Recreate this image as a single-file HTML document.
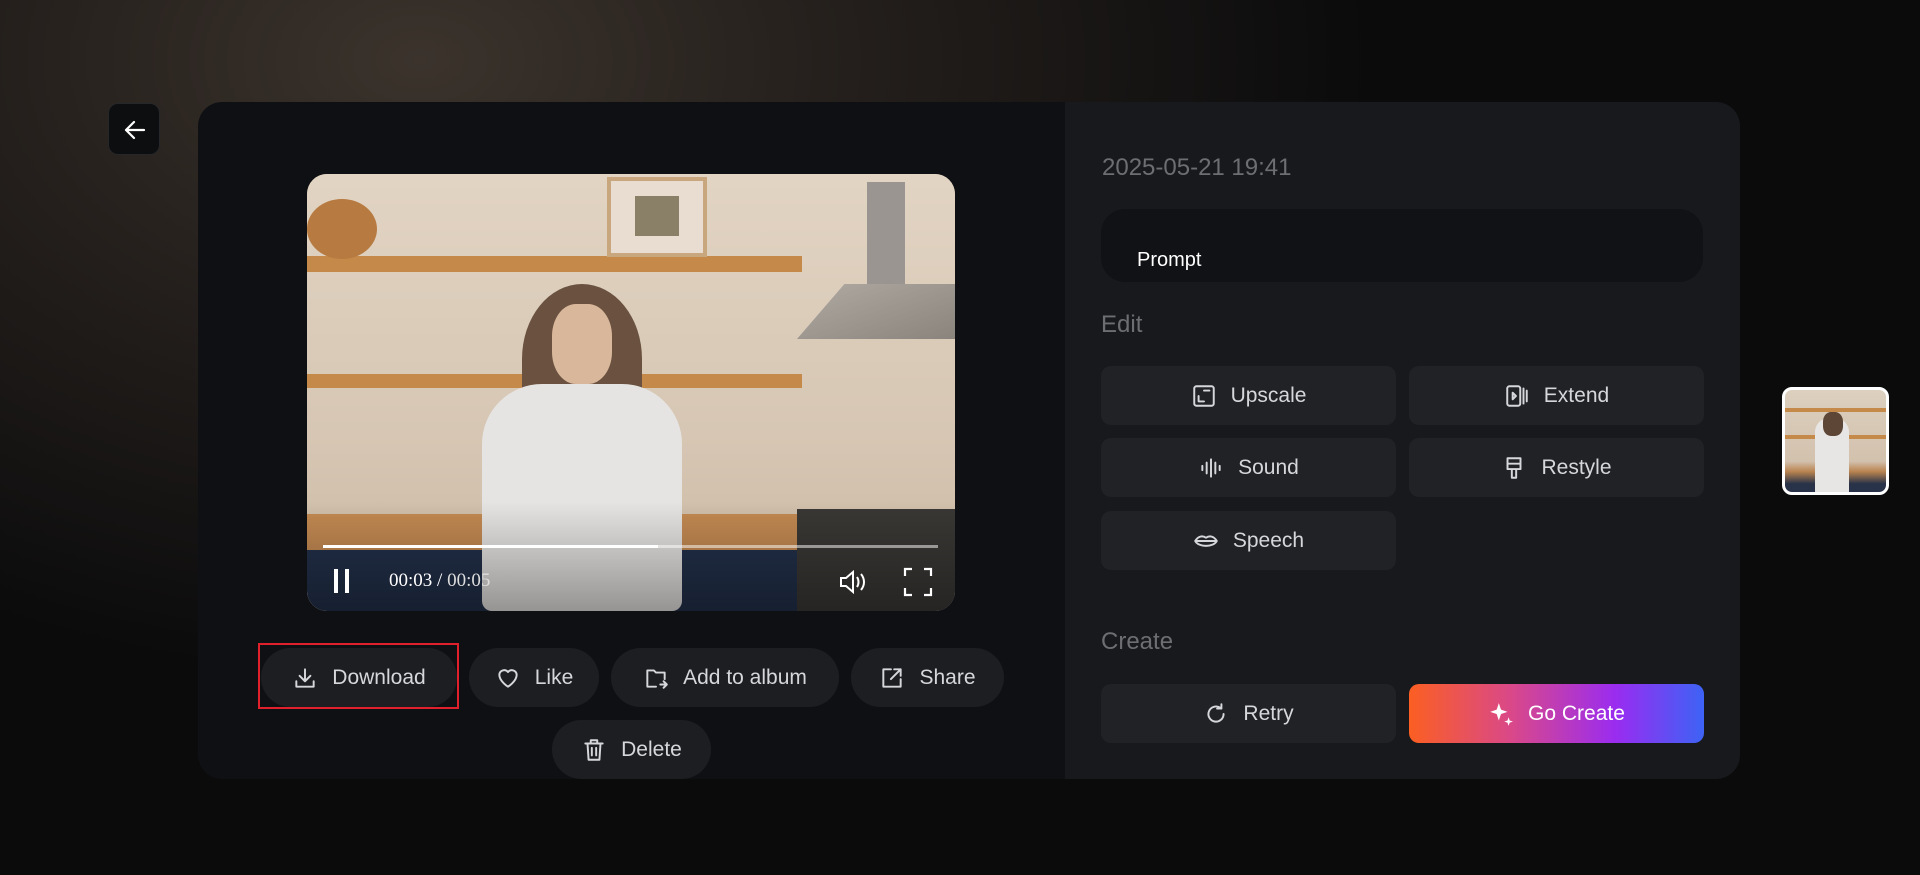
<!DOCTYPE html>
<html><head><meta charset="utf-8">
<style>
*{margin:0;padding:0;box-sizing:border-box}
body{width:1920px;height:875px;overflow:hidden;font-family:"Liberation Sans",sans-serif;
background:radial-gradient(ellipse 950px 620px at 420px 60px,#3b332c 0%,#241f1c 45%,#0b0b0c 100%),#0b0b0c;position:relative}
.back{position:absolute;left:108px;top:103px;width:52px;height:52px;border-radius:10px;background:#0d0e10;border:1px solid #26272a}
.card{position:absolute;left:198px;top:102px;width:1542px;height:677px;border-radius:24px;overflow:hidden;background:#0f1013}
.right{position:absolute;left:867px;top:0;width:675px;height:677px;background:#18191d}
.video{position:absolute;left:109px;top:72px;width:648px;height:437px;border-radius:20px;overflow:hidden;background:#d8c8b4}
.pill{position:absolute;height:59px;border-radius:30px;background:#1d1e21;color:#d6d7da;font-size:21px;display:flex;align-items:center;justify-content:center;gap:14px}
.pill svg{width:26px;height:26px;fill:none;stroke:#d6d7da;stroke-width:1.8;stroke-linecap:round;stroke-linejoin:round}
.date{position:absolute;left:1102px;top:154px;font-size:24px;color:#6d6e72}
.prompt{position:absolute;left:1101px;top:209px;width:602px;height:73px;border-radius:24px;background:#111215;color:#fff;font-size:20px;padding:40px 0 0 36px}
.lbl{position:absolute;left:1101px;font-size:24px;color:#6d6e72}
.eb{position:absolute;width:295px;height:59px;border-radius:10px;background:#202226;color:#d6d7da;font-size:21px;display:flex;align-items:center;justify-content:center;gap:14px}
.eb svg{width:26px;height:26px;fill:none;stroke:#d6d7da;stroke-width:1.8;stroke-linecap:round;stroke-linejoin:round}
</style></head><body>
<div class="back"><svg width="52" height="52" viewBox="0 0 52 52"><path d="M35 26H17M25 18l-8 8 8 8" fill="none" stroke="#fff" stroke-width="2.2" stroke-linecap="round" stroke-linejoin="round"/></svg></div>
<div class="card">
 <div class="right"></div>
 <div class="video">
  <div style="position:absolute;left:0;top:0;width:648px;height:437px;background:linear-gradient(180deg,#e2d4c3 0%,#d6c6b3 60%,#c9b8a2 100%)"></div>
  <div style="position:absolute;left:0;top:82px;width:495px;height:16px;background:#c58a4a"></div>
  <div style="position:absolute;left:0;top:200px;width:495px;height:14px;background:#c58a4a"></div>
  <div style="position:absolute;left:300px;top:3px;width:100px;height:80px;border:4px solid #c9a77e;background:#e8ddd0"></div>
  <div style="position:absolute;left:328px;top:22px;width:44px;height:40px;background:#8a8068"></div>
  <div style="position:absolute;left:0;top:25px;width:70px;height:60px;border-radius:50%;background:#b77a40"></div>
  <div style="position:absolute;left:560px;top:8px;width:38px;height:120px;background:#9a9590"></div>
  <div style="position:absolute;left:490px;top:110px;width:158px;height:55px;background:linear-gradient(160deg,#b0aaa3,#8a847d);clip-path:polygon(30% 0,100% 0,100% 100%,0 100%)"></div>
  <div style="position:absolute;left:0;top:340px;width:648px;height:36px;background:#c48a52"></div>
  <div style="position:absolute;left:0;top:376px;width:648px;height:61px;background:#22304a"></div>
  <div style="position:absolute;left:490px;top:335px;width:158px;height:102px;background:#3a3835"></div>
  <div style="position:absolute;left:215px;top:110px;width:120px;height:150px;border-radius:50% 50% 30% 30%;background:#6a5140"></div>
  <div style="position:absolute;left:175px;top:210px;width:200px;height:227px;border-radius:60px 60px 10px 10px;background:#e6e4e2"></div>
  <div style="position:absolute;left:245px;top:130px;width:60px;height:80px;border-radius:40%;background:#d9b79a"></div>
  <div style="position:absolute;left:0;top:0;width:648px;height:437px;background:linear-gradient(180deg,rgba(0,0,0,0) 75%,rgba(0,0,0,.35) 100%)"></div>
  <div style="position:absolute;left:16px;top:371px;width:615px;height:3px;background:rgba(255,255,255,.5)"></div>
  <div style="position:absolute;left:16px;top:371px;width:335px;height:3px;background:#fff"></div>
  <div style="position:absolute;left:27px;top:395px;width:4px;height:24px;background:#fff"></div>
  <div style="position:absolute;left:38px;top:395px;width:4px;height:24px;background:#fff"></div>
  <div style="position:absolute;left:82px;top:396px;font-family:'Liberation Serif',serif;font-size:19px;color:#fff">00:03 / <span style="color:#ddd">00:05</span></div>
  <svg style="position:absolute;left:530px;top:392px" width="32" height="32" viewBox="0 0 32 32" fill="none" stroke="#fff" stroke-width="2"><path d="M4 12h5l7-6v20l-7-6H4z"/><path d="M20 11c2 3 2 7 0 10M24 8c4 5 4 11 0 16"/></svg>
  <svg style="position:absolute;left:596px;top:393px" width="30" height="30" viewBox="0 0 30 30" fill="none" stroke="#fff" stroke-width="2.2"><path d="M2 9V2h7M21 2h7v7M28 21v7h-7M9 28H2v-7"/></svg>
 </div>
</div>
<div style="position:absolute;left:258px;top:643px;width:201px;height:66px;border:2px solid #e0202a"></div>
<div class="pill" style="left:261px;top:648px;width:196px"><svg viewBox="0 0 24 24"><path d="M12 4v11M7 10l5 5 5-5M4 15v5h16v-5"/></svg>Download</div>
<div class="pill" style="left:469px;top:648px;width:130px"><svg viewBox="0 0 24 24"><path d="M12 20s-8-5-8-11a4.5 4.5 0 0 1 8-2.5A4.5 4.5 0 0 1 20 9c0 6-8 11-8 11z"/></svg>Like</div>
<div class="pill" style="left:611px;top:648px;width:228px"><svg viewBox="0 0 24 24"><path d="M12 20H4V5h6l2 2h8v6M16 18h6M19 15l3 3-3 3"/></svg>Add to album</div>
<div class="pill" style="left:851px;top:648px;width:153px"><svg viewBox="0 0 24 24"><path d="M11 4H4v16h16v-7M14 4h6v6M20 4l-9 9"/></svg>Share</div>
<div class="pill" style="left:552px;top:720px;width:159px"><svg viewBox="0 0 24 24"><path d="M4 6h16M9 6V3h6v3M6 6l1 15h10l1-15M10 10v7M14 10v7"/></svg>Delete</div>

<div class="date">2025-05-21 19:41</div>
<div class="prompt">Prompt</div>
<div class="lbl" style="top:311px">Edit</div>
<div class="eb" style="left:1101px;top:366px"><svg viewBox="0 0 24 24"><rect x="3" y="3" width="18" height="18" rx="2"/><path d="M7 12v5h5M12 7h5"/></svg>Upscale</div>
<div class="eb" style="left:1409px;top:366px"><svg viewBox="0 0 24 24"><rect x="3" y="3" width="12" height="18" rx="2"/><path d="M8 9l3 3-3 3z M18 5v14M21 7v10"/></svg>Extend</div>
<div class="eb" style="left:1101px;top:438px"><svg viewBox="0 0 24 24"><path d="M4 10v4M8 7v10M12 4v16M16 7v10M20 10v4"/></svg>Sound</div>
<div class="eb" style="left:1409px;top:438px"><svg viewBox="0 0 24 24"><path d="M6 3h12v10H6zM6 8h12M10 13v8h4v-8"/></svg>Restyle</div>
<div class="eb" style="left:1101px;top:511px"><svg viewBox="0 0 24 24"><path d="M2 12c3-5 7-5 10-3 3-2 7-2 10 3-3 6-17 6-20 0zM2 12h20"/></svg>Speech</div>
<div class="lbl" style="top:628px">Create</div>
<div class="eb" style="left:1101px;top:684px"><svg viewBox="0 0 24 24"><path d="M19 12a7 7 0 1 1-3-5.7M17 3v4h-4"/></svg>Retry</div>
<div class="eb" style="left:1409px;top:684px;background:linear-gradient(90deg,#fb5f22,#d9488a 35%,#9a2cf0 70%,#3d63f5);color:#fff"><svg viewBox="0 0 24 24" style="fill:#fff;stroke:none"><path d="M10 2l2 6 6 2-6 2-2 6-2-6-6-2 6-2zM19 15l1 3 3 1-3 1-1 3-1-3-3-1 3-1z"/></svg>Go Create</div>

<div style="position:absolute;left:1782px;top:387px;width:107px;height:108px;border:3px solid #fff;border-radius:10px;overflow:hidden;background:linear-gradient(180deg,#ddd0bf 0%,#d2c1ad 70%,#b98450 80%,#283248 92%)">
 <div style="position:absolute;left:0;top:18px;width:100%;height:4px;background:#c58a4a"></div>
 <div style="position:absolute;left:0;top:45px;width:100%;height:4px;background:#c58a4a"></div>
 <div style="position:absolute;left:30px;top:28px;width:34px;height:75px;border-radius:14px 14px 2px 2px;background:#e8e6e4"></div>
 <div style="position:absolute;left:38px;top:22px;width:20px;height:24px;border-radius:40%;background:#5d4636"></div>
</div>
</body></html>
